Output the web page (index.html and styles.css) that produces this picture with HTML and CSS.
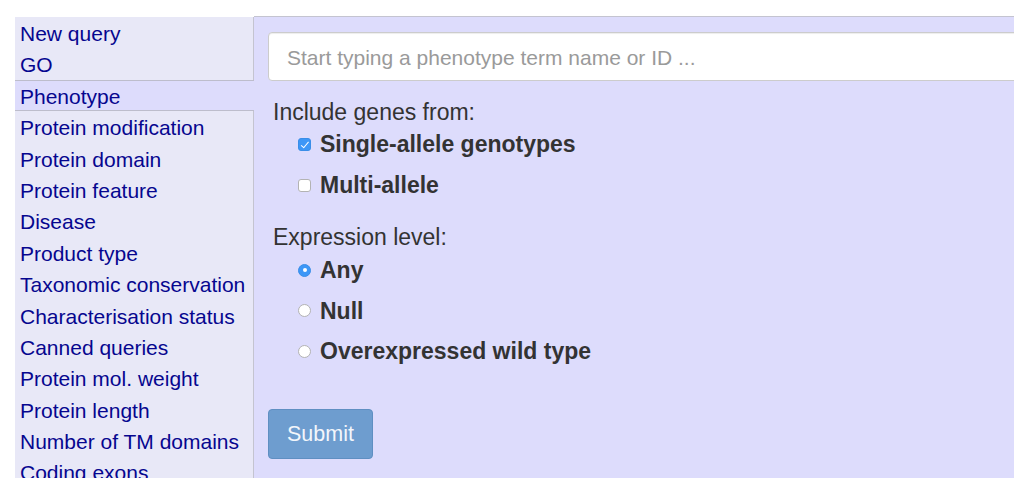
FILE: index.html
```html
<!DOCTYPE html>
<html>
<head>
<meta charset="utf-8">
<link rel="stylesheet" href="styles.css">
</head>
<body>
<div class="page">
  <ul class="sidebar">
    <li class="item">New query</li>
    <li class="item">GO</li>
    <li class="item selected">Phenotype</li>
    <li class="item">Protein modification</li>
    <li class="item">Protein domain</li>
    <li class="item">Protein feature</li>
    <li class="item">Disease</li>
    <li class="item">Product type</li>
    <li class="item">Taxonomic conservation</li>
    <li class="item">Characterisation status</li>
    <li class="item">Canned queries</li>
    <li class="item">Protein mol. weight</li>
    <li class="item">Protein length</li>
    <li class="item">Number of TM domains</li>
    <li class="item">Coding exons</li>
  </ul>
  <div class="main">
    <input class="search" type="text" placeholder="Start typing a phenotype term name or ID ...">
    <div class="group-label first">Include genes from:</div>
    <label class="option"><span class="box checkbox checked"></span>Single-allele genotypes</label>
    <label class="option spaced"><span class="box checkbox"></span>Multi-allele</label>
    <div class="group-label second">Expression level:</div>
    <label class="option"><span class="box radio checked"></span>Any</label>
    <label class="option rspaced"><span class="box radio"></span>Null</label>
    <label class="option rspaced"><span class="box radio"></span>Overexpressed wild type</label>
    <button class="submit" type="button">Submit</button>
  </div>
</div>
</body>
</html>
```
FILE: styles.css
```css
html, body {
  margin: 0;
  padding: 0;
  background: #ffffff;
  overflow: hidden;
}
body {
  font-family: "Liberation Sans", Arial, sans-serif;
  font-size: 20px;
}
.page {
  display: flex;
  padding: 17px 0 0 15px;
  height: 461px;
}
.sidebar {
  list-style: none;
  margin: 0;
  padding: 0;
  width: 238px;
  flex: none;
  background: #e8e8f7;
  border-right: 1px solid #c4c4d0;
  position: relative;
  z-index: 1;
}
.item {
  color: #06068f;
  font-size: 21px;
  line-height: 28.4px;
  height: 31.4px;
  padding: 3px 0 0 5px;
  white-space: nowrap;
  box-sizing: border-box;
}
.item.selected {
  background: #dddcfc;
  border-top: 1px solid #bdbdcc;
  border-bottom: 1px solid #bdbdcc;
  margin-right: -1px;
  line-height: 27.4px;
  padding-top: 2px;
}
.main {
  flex: 1;
  background: #dddcfc;
  border-top: 1px solid #c4c4d0;
  margin-top: -1px;
  padding: 15px 0 0 14px;
  display: flex;
  flex-direction: column;
  align-items: flex-start;
  overflow: hidden;
}
.search {
  width: 900px;
  height: 49px;
  box-sizing: border-box;
  flex: none;
  border: 1px solid #cccccc;
  border-radius: 4px;
  background: #ffffff;
  padding: 2px 18px 0;
  font-family: "Liberation Sans", Arial, sans-serif;
  font-size: 21px;
  color: #555;
  box-shadow: inset 0 1px 1px rgba(0,0,0,0.075);
  outline: none;
}
.search::placeholder {
  color: #9a9a9a;
}
.group-label {
  color: #333333;
  font-size: 23px;
  line-height: 24px;
  margin-left: 5px;
}
.group-label.first {
  margin-top: 19px;
  margin-bottom: 8px;
}
.group-label.second {
  margin-top: 28px;
  margin-bottom: 9px;
}
.option {
  display: flex;
  align-items: center;
  font-size: 23px;
  line-height: 24px;
  font-weight: bold;
  color: #333333;
  margin-left: 30px;
}
.option.spaced {
  margin-top: 17px;
}
.option.rspaced {
  margin-top: 16.5px;
}
.box {
  width: 13px;
  height: 13px;
  box-sizing: border-box;
  margin-right: 9px;
  flex: none;
  background: #ffffff;
  border: 1px solid #b3b3b3;
  position: relative;
}
.checkbox {
  border-radius: 3px;
}
.checkbox.checked {
  background: #3d97f7;
  border-color: #3a8ee8;
}
.checkbox.checked::after {
  content: "";
  position: absolute;
  left: 3.5px;
  top: 1px;
  width: 3px;
  height: 6.5px;
  border-right: 1.5px solid #ffffff;
  border-bottom: 1.5px solid #ffffff;
  transform: rotate(40deg);
}
.radio {
  border-radius: 50%;
}
.radio.checked {
  background: #3d97f7;
  border-color: #3a8ee8;
}
.radio.checked::after {
  content: "";
  position: absolute;
  left: 3.5px;
  top: 3.5px;
  width: 4px;
  height: 4px;
  border-radius: 50%;
  background: #ffffff;
}
.submit {
  margin-top: 46px;
  width: 105px;
  height: 50px;
  flex: none;
  background: #6e9dcf;
  border: 1px solid #5f8fc2;
  border-radius: 4px;
  color: #f3f6fb;
  font-family: "Liberation Sans", Arial, sans-serif;
  font-size: 21.5px;
  padding: 0;
}
```
